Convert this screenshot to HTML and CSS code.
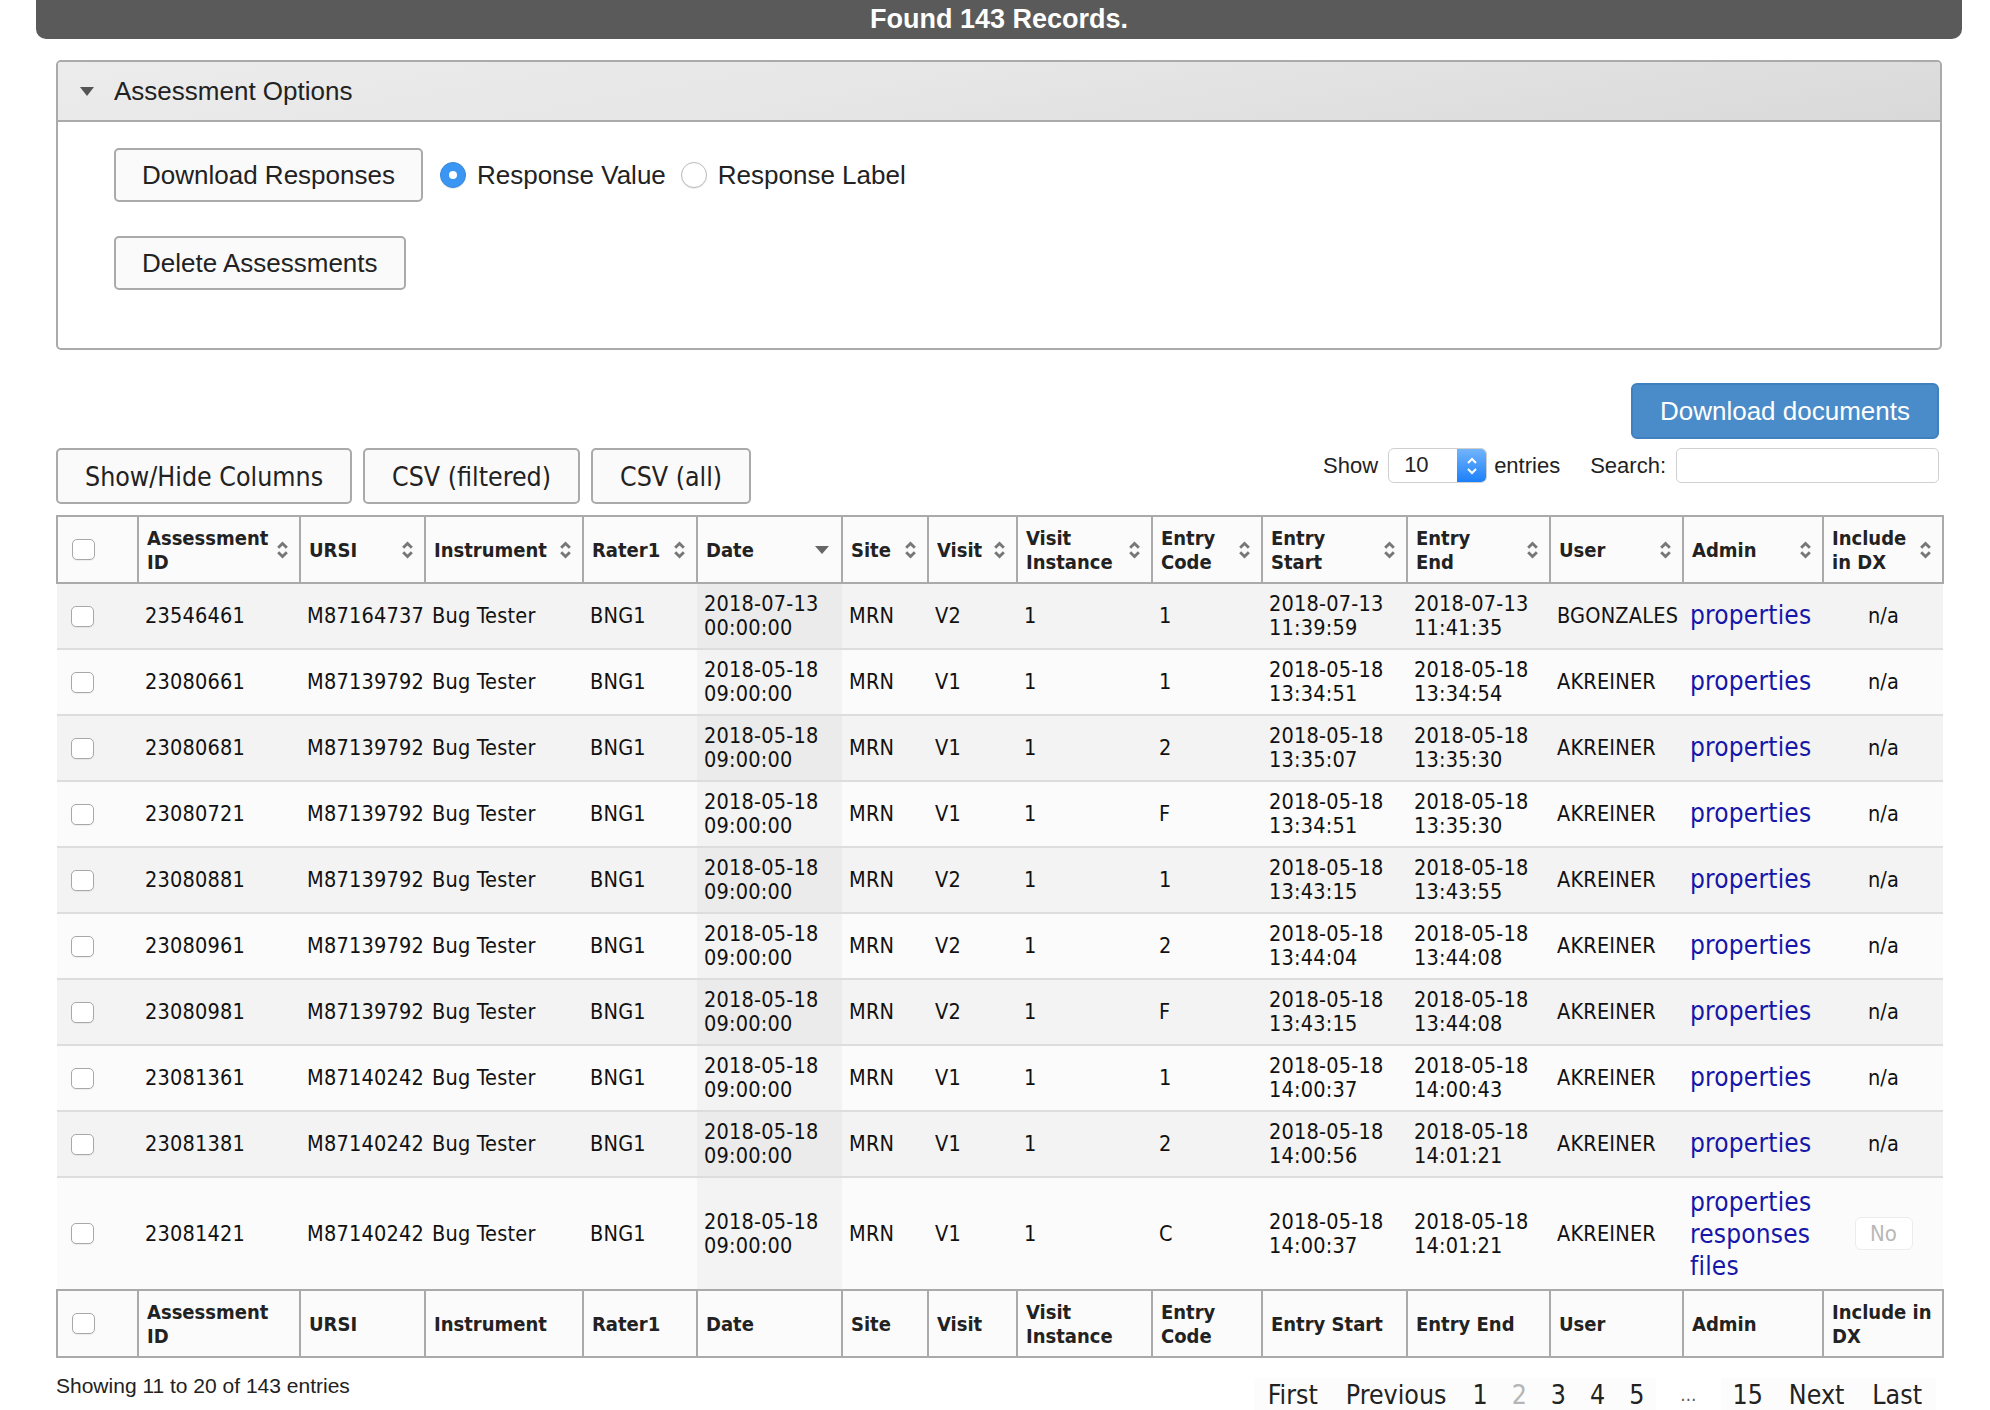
FILE: index.html
```html
<!DOCTYPE html>
<html lang="en">
<head>
    <meta charset="UTF-8">
    <meta name="viewport" content="width=device-width, initial-scale=1.0">
    <title>Assessments</title>
    <link rel="stylesheet" href="styles.css">
</head>
<body>
    <div class="records-bar">Found 143 Records.</div>

    <div class="page">
        <section class="panel">
            <div class="panel-head"><span class="caret"></span>Assessment Options</div>
            <div class="panel-body">
                <div class="opt-row">
                    <button class="btn">Download Responses</button>
                    <label class="radio first"><span class="radio-dot on"></span>Response Value</label>
                    <label class="radio"><span class="radio-dot"></span>Response Label</label>
                </div>
                <div class="opt-row">
                    <button class="btn">Delete Assessments</button>
                </div>
            </div>
        </section>

        <div class="docs-row">
            <button class="btn-primary">Download documents</button>
        </div>

        <div class="toolbar">
            <div class="dt-buttons">
                <button class="dt-btn">Show/Hide Columns</button>
                <button class="dt-btn">CSV (filtered)</button>
                <button class="dt-btn">CSV (all)</button>
            </div>
            <div class="dt-controls">
                <span>Show</span>
                <div class="len-select">
                    <span class="len-value">10</span>
                    <span class="len-stepper">
                        <svg width="14" height="22" viewBox="0 0 14 22"><path d="M3 8 L7 4 L11 8 M3 14 L7 18 L11 14" fill="none" stroke="#fff" stroke-width="2"/></svg>
                    </span>
                </div>
                <span class="entries">entries</span>
                <span class="search-label">Search:</span>
                <span class="search-box"></span>
            </div>
        </div>

        <table class="grid">
            <colgroup>
                <col style="width:81px"><col style="width:162px"><col style="width:125px"><col style="width:158px">
                <col style="width:114px"><col style="width:145px"><col style="width:86px"><col style="width:89px">
                <col style="width:135px"><col style="width:110px"><col style="width:145px"><col style="width:143px">
                <col style="width:133px"><col style="width:140px"><col style="width:120px">
            </colgroup>
            <thead>
                <tr>
                    <th class="cb-cell"><span class="cb"></span></th>
                    <th><div class="th-in"><span>Assessment<br>ID</span><svg class="sort" viewBox="0 0 12 20"><path d="M2 8 L6 4 L10 8 M2 12 L6 16 L10 12"/></svg></div></th>
                    <th><div class="th-in"><span>URSI</span><svg class="sort" viewBox="0 0 12 20"><path d="M2 8 L6 4 L10 8 M2 12 L6 16 L10 12"/></svg></div></th>
                    <th><div class="th-in"><span>Instrument</span><svg class="sort" viewBox="0 0 12 20"><path d="M2 8 L6 4 L10 8 M2 12 L6 16 L10 12"/></svg></div></th>
                    <th><div class="th-in"><span>Rater1</span><svg class="sort" viewBox="0 0 12 20"><path d="M2 8 L6 4 L10 8 M2 12 L6 16 L10 12"/></svg></div></th>
                    <th><div class="th-in"><span>Date</span><svg class="sort-desc" viewBox="0 0 14 8"><path d="M0 0 L14 0 L7 8 Z"/></svg></div></th>
                    <th><div class="th-in"><span>Site</span><svg class="sort" viewBox="0 0 12 20"><path d="M2 8 L6 4 L10 8 M2 12 L6 16 L10 12"/></svg></div></th>
                    <th><div class="th-in"><span>Visit</span><svg class="sort" viewBox="0 0 12 20"><path d="M2 8 L6 4 L10 8 M2 12 L6 16 L10 12"/></svg></div></th>
                    <th><div class="th-in"><span>Visit<br>Instance</span><svg class="sort" viewBox="0 0 12 20"><path d="M2 8 L6 4 L10 8 M2 12 L6 16 L10 12"/></svg></div></th>
                    <th><div class="th-in"><span>Entry<br>Code</span><svg class="sort" viewBox="0 0 12 20"><path d="M2 8 L6 4 L10 8 M2 12 L6 16 L10 12"/></svg></div></th>
                    <th><div class="th-in"><span>Entry<br>Start</span><svg class="sort" viewBox="0 0 12 20"><path d="M2 8 L6 4 L10 8 M2 12 L6 16 L10 12"/></svg></div></th>
                    <th><div class="th-in"><span>Entry<br>End</span><svg class="sort" viewBox="0 0 12 20"><path d="M2 8 L6 4 L10 8 M2 12 L6 16 L10 12"/></svg></div></th>
                    <th><div class="th-in"><span>User</span><svg class="sort" viewBox="0 0 12 20"><path d="M2 8 L6 4 L10 8 M2 12 L6 16 L10 12"/></svg></div></th>
                    <th><div class="th-in"><span>Admin</span><svg class="sort" viewBox="0 0 12 20"><path d="M2 8 L6 4 L10 8 M2 12 L6 16 L10 12"/></svg></div></th>
                    <th><div class="th-in"><span>Include<br>in DX</span><svg class="sort" viewBox="0 0 12 20"><path d="M2 8 L6 4 L10 8 M2 12 L6 16 L10 12"/></svg></div></th>
                </tr>
            </thead>
            <tbody>
                <tr>
                    <td class="cb-cell"><span class="cb"></span></td>
                    <td>23546461</td><td>M87164737</td><td>Bug Tester</td><td>BNG1</td>
                    <td class="sorted">2018-07-13<br>00:00:00</td>
                    <td>MRN</td><td>V2</td><td>1</td><td>1</td>
                    <td>2018-07-13<br>11:39:59</td><td>2018-07-13<br>11:41:35</td>
                    <td>BGONZALES</td><td><a href="#">properties</a></td><td class="center">n/a</td>
                </tr>
                <tr>
                    <td class="cb-cell"><span class="cb"></span></td>
                    <td>23080661</td><td>M87139792</td><td>Bug Tester</td><td>BNG1</td>
                    <td class="sorted">2018-05-18<br>09:00:00</td>
                    <td>MRN</td><td>V1</td><td>1</td><td>1</td>
                    <td>2018-05-18<br>13:34:51</td><td>2018-05-18<br>13:34:54</td>
                    <td>AKREINER</td><td><a href="#">properties</a></td><td class="center">n/a</td>
                </tr>
                <tr>
                    <td class="cb-cell"><span class="cb"></span></td>
                    <td>23080681</td><td>M87139792</td><td>Bug Tester</td><td>BNG1</td>
                    <td class="sorted">2018-05-18<br>09:00:00</td>
                    <td>MRN</td><td>V1</td><td>1</td><td>2</td>
                    <td>2018-05-18<br>13:35:07</td><td>2018-05-18<br>13:35:30</td>
                    <td>AKREINER</td><td><a href="#">properties</a></td><td class="center">n/a</td>
                </tr>
                <tr>
                    <td class="cb-cell"><span class="cb"></span></td>
                    <td>23080721</td><td>M87139792</td><td>Bug Tester</td><td>BNG1</td>
                    <td class="sorted">2018-05-18<br>09:00:00</td>
                    <td>MRN</td><td>V1</td><td>1</td><td>F</td>
                    <td>2018-05-18<br>13:34:51</td><td>2018-05-18<br>13:35:30</td>
                    <td>AKREINER</td><td><a href="#">properties</a></td><td class="center">n/a</td>
                </tr>
                <tr>
                    <td class="cb-cell"><span class="cb"></span></td>
                    <td>23080881</td><td>M87139792</td><td>Bug Tester</td><td>BNG1</td>
                    <td class="sorted">2018-05-18<br>09:00:00</td>
                    <td>MRN</td><td>V2</td><td>1</td><td>1</td>
                    <td>2018-05-18<br>13:43:15</td><td>2018-05-18<br>13:43:55</td>
                    <td>AKREINER</td><td><a href="#">properties</a></td><td class="center">n/a</td>
                </tr>
                <tr>
                    <td class="cb-cell"><span class="cb"></span></td>
                    <td>23080961</td><td>M87139792</td><td>Bug Tester</td><td>BNG1</td>
                    <td class="sorted">2018-05-18<br>09:00:00</td>
                    <td>MRN</td><td>V2</td><td>1</td><td>2</td>
                    <td>2018-05-18<br>13:44:04</td><td>2018-05-18<br>13:44:08</td>
                    <td>AKREINER</td><td><a href="#">properties</a></td><td class="center">n/a</td>
                </tr>
                <tr>
                    <td class="cb-cell"><span class="cb"></span></td>
                    <td>23080981</td><td>M87139792</td><td>Bug Tester</td><td>BNG1</td>
                    <td class="sorted">2018-05-18<br>09:00:00</td>
                    <td>MRN</td><td>V2</td><td>1</td><td>F</td>
                    <td>2018-05-18<br>13:43:15</td><td>2018-05-18<br>13:44:08</td>
                    <td>AKREINER</td><td><a href="#">properties</a></td><td class="center">n/a</td>
                </tr>
                <tr>
                    <td class="cb-cell"><span class="cb"></span></td>
                    <td>23081361</td><td>M87140242</td><td>Bug Tester</td><td>BNG1</td>
                    <td class="sorted">2018-05-18<br>09:00:00</td>
                    <td>MRN</td><td>V1</td><td>1</td><td>1</td>
                    <td>2018-05-18<br>14:00:37</td><td>2018-05-18<br>14:00:43</td>
                    <td>AKREINER</td><td><a href="#">properties</a></td><td class="center">n/a</td>
                </tr>
                <tr>
                    <td class="cb-cell"><span class="cb"></span></td>
                    <td>23081381</td><td>M87140242</td><td>Bug Tester</td><td>BNG1</td>
                    <td class="sorted">2018-05-18<br>09:00:00</td>
                    <td>MRN</td><td>V1</td><td>1</td><td>2</td>
                    <td>2018-05-18<br>14:00:56</td><td>2018-05-18<br>14:01:21</td>
                    <td>AKREINER</td><td><a href="#">properties</a></td><td class="center">n/a</td>
                </tr>
                <tr class="tall">
                    <td class="cb-cell"><span class="cb"></span></td>
                    <td>23081421</td><td>M87140242</td><td>Bug Tester</td><td>BNG1</td>
                    <td class="sorted">2018-05-18<br>09:00:00</td>
                    <td>MRN</td><td>V1</td><td>1</td><td>C</td>
                    <td>2018-05-18<br>14:00:37</td><td>2018-05-18<br>14:01:21</td>
                    <td>AKREINER</td>
                    <td class="links"><a href="#">properties</a><a href="#">responses</a><a href="#">files</a></td>
                    <td class="center"><button class="no-btn" disabled>No</button></td>
                </tr>
            </tbody>
            <tfoot>
                <tr>
                    <th class="cb-cell"><span class="cb"></span></th>
                    <th>Assessment<br>ID</th><th>URSI</th><th>Instrument</th><th>Rater1</th><th>Date</th>
                    <th>Site</th><th>Visit</th><th>Visit<br>Instance</th><th>Entry<br>Code</th>
                    <th>Entry Start</th><th>Entry End</th><th>User</th><th>Admin</th><th>Include in<br>DX</th>
                </tr>
            </tfoot>
        </table>

        <div class="dt-foot">
            <div class="dt-info">Showing 11 to 20 of 143 entries</div>
            <div class="paging">
                <a href="#">First</a>
                <a href="#">Previous</a>
                <a href="#" class="num">1</a>
                <span class="num current">2</span>
                <a href="#" class="num">3</a>
                <a href="#" class="num">4</a>
                <a href="#" class="num">5</a>
                <span class="ellipsis">…</span>
                <a href="#" class="num">15</a>
                <a href="#">Next</a>
                <a href="#">Last</a>
            </div>
        </div>
    </div>
</body>
</html>
```

FILE: styles.css
```css
* {
    box-sizing: border-box;
}
body {
    margin: 0;
    font-family: "Liberation Sans", Arial, sans-serif;
    color: #222;
    background: #fff;
}

/* top bar */
.records-bar {
    margin: 0 28px 0 36px;
    height: 39px;
    line-height: 39px;
    background: #5a5a5a;
    color: #fff;
    font-size: 27px;
    font-weight: bold;
    text-align: center;
    border-radius: 0 0 10px 10px;
}

.page {
    margin: 21px 48px 0 56px;
}

/* options panel */
.panel {
    border: 2px solid #aaa;
    border-radius: 5px;
}
.panel-head {
    height: 60px;
    display: flex;
    align-items: center;
    padding-left: 22px;
    font-size: 26px;
    background: linear-gradient(170deg, #ececec 0%, #e6e6e6 45%, #d9d9d9 100%);
    border-bottom: 2px solid #aaa;
    border-radius: 3px 3px 0 0;
}
.caret {
    width: 0;
    height: 0;
    border-left: 7px solid transparent;
    border-right: 7px solid transparent;
    border-top: 9px solid #555;
    margin-right: 20px;
}
.panel-body {
    display: flex;
    flex-direction: column;
    gap: 34px;
    padding: 26px 0 58px 56px;
}
.opt-row {
    display: flex;
    align-items: center;
}
.btn {
    height: 54px;
    padding: 0 26px;
    font-family: "Liberation Sans", Arial, sans-serif;
    font-size: 26px;
    color: #222;
    background: #fafafa;
    border: 2px solid #aaa;
    border-radius: 5px;
}
.radio {
    display: flex;
    align-items: center;
    margin-left: 15px;
    font-size: 26px;
    color: #222;
}
.radio.first {
    margin-left: 17px;
}
.radio-dot {
    width: 26px;
    height: 26px;
    margin-right: 11px;
    border: 1.5px solid #bbb;
    border-radius: 50%;
    background: #fff;
    box-shadow: 0 1px 1px rgba(0,0,0,.08);
}
.radio-dot.on {
    display: flex;
    align-items: center;
    justify-content: center;
    background: #3b95f3;
    border-color: #3486e0;
}
.radio-dot.on::after {
    content: "";
    width: 8px;
    height: 8px;
    border-radius: 50%;
    background: #fff;
}

/* download documents */
.docs-row {
    display: flex;
    justify-content: flex-end;
    margin-top: 33px;
    padding-right: 3px;
}
.btn-primary {
    height: 56px;
    padding: 0 27px;
    font-family: "Liberation Sans", Arial, sans-serif;
    font-size: 26px;
    color: #fff;
    background: #4a8cc9;
    border: 2px solid #3f80be;
    border-radius: 6px;
}

/* table toolbar */
.toolbar {
    display: flex;
    justify-content: space-between;
    align-items: flex-start;
    margin-top: 9px;
}
.dt-buttons {
    display: flex;
    gap: 11px;
}
.dt-btn {
    height: 56px;
    padding: 0 27px;
    font-family: "Liberation Sans Narrow", "DejaVu Sans Condensed", "Liberation Sans", sans-serif;
    font-size: 26.5px;
    color: #222;
    background: #fafafa;
    border: 2px solid #aaa;
    border-radius: 5px;
}
.dt-controls {
    display: flex;
    align-items: center;
    height: 35px;
    padding-right: 3px;
    font-size: 22px;
    color: #222;
}
.len-select {
    display: flex;
    width: 99px;
    height: 35px;
    margin: 0 7px 0 10px;
    border: 1.5px solid #cfcfcf;
    border-radius: 6px;
    overflow: hidden;
    background: #fff;
}
.len-value {
    flex: 1;
    padding-left: 15px;
    line-height: 32px;
    font-size: 22px;
}
.len-stepper {
    width: 29px;
    display: flex;
    align-items: center;
    justify-content: center;
    background: linear-gradient(#72b4fb, #1c80fa);
}
.search-label {
    margin-left: 30px;
}
.search-box {
    width: 263px;
    height: 35px;
    margin-left: 10px;
    border: 1.5px solid #d0d0d0;
    border-radius: 5px;
    background: #fff;
}

/* data table */
.grid {
    width: 100%;
    margin-top: 11px;
    table-layout: fixed;
    border-collapse: collapse;
    font-family: "Liberation Sans Narrow", "DejaVu Sans Condensed", "Liberation Sans", sans-serif;
    color: #111;
}
.grid th {
    height: 67px;
    padding: 0 10px 0 8px;
    font-size: 20px;
    line-height: 24px;
    font-weight: bold;
    text-align: left;
    white-space: nowrap;
    background: #fbfbfb;
    border: 2px solid #aaa;
    color: #222;
}
.th-in {
    display: flex;
    align-items: center;
    justify-content: space-between;
}
.sort {
    width: 13px;
    height: 22px;
    flex: none;
}
.sort path {
    fill: none;
    stroke: #777;
    stroke-width: 2.6;
}
.sort-desc {
    width: 14px;
    height: 8px;
    flex: none;
    margin-right: 2px;
    fill: #666;
}
.grid td {
    height: 66px;
    padding: 0 6px 0 7px;
    font-size: 21.5px;
    line-height: 24px;
    letter-spacing: 0.2px;
    white-space: nowrap;
    border-bottom: 2px solid #ddd;
}
.grid tbody tr:nth-child(odd) td {
    background: #f3f3f3;
}
.grid tbody tr:nth-child(even) td {
    background: #fbfbfb;
}
.grid tbody tr:nth-child(odd) td.sorted {
    background: #ebebeb;
}
.grid tbody tr:nth-child(even) td.sorted {
    background: #f3f3f3;
}
.grid tbody tr.tall td {
    height: 113px;
    border-bottom: none;
}
.grid .cb-cell {
    padding-left: 14px;
}
.cb {
    display: block;
    width: 23px;
    height: 21px;
    border: 1.5px solid #a8a8a8;
    border-radius: 5px;
    background: #fff;
    box-shadow: 0 1px 1px rgba(0,0,0,.06);
}
.grid a {
    font-size: 26px;
    color: #1616a8;
    text-decoration: none;
}
.grid td.links a {
    display: block;
    line-height: 32px;
}
.grid td.center {
    text-align: center;
}
.no-btn {
    width: 58px;
    height: 33px;
    padding: 0;
    font-family: "Liberation Sans Narrow", "DejaVu Sans Condensed", "Liberation Sans", sans-serif;
    font-size: 22px;
    color: #b8b8b8;
    background: #fff;
    border: 1.5px solid #ececec;
    border-radius: 6px;
}

/* footer: info + paging */
.dt-foot {
    display: flex;
    justify-content: space-between;
    align-items: flex-start;
}
.dt-info {
    margin-top: 16px;
    font-size: 21px;
    line-height: 24px;
    color: #222;
}
.paging {
    display: flex;
    align-items: center;
    margin-top: 20px;
    padding-right: 6px;
    font-family: "Liberation Sans Narrow", "DejaVu Sans Condensed", "Liberation Sans", sans-serif;
    font-size: 26.5px;
}
.paging a, .paging span {
    padding: 0 14px;
    line-height: 34px;
    color: #222;
    text-decoration: none;
    background: #fcfcfc;
}
.paging .num {
    padding: 0 12px;
}
.paging .current {
    color: #b5b5b5;
}
.paging .ellipsis {
    padding: 0 24px;
    font-size: 18px;
    color: #555;
    background: none;
}
```
